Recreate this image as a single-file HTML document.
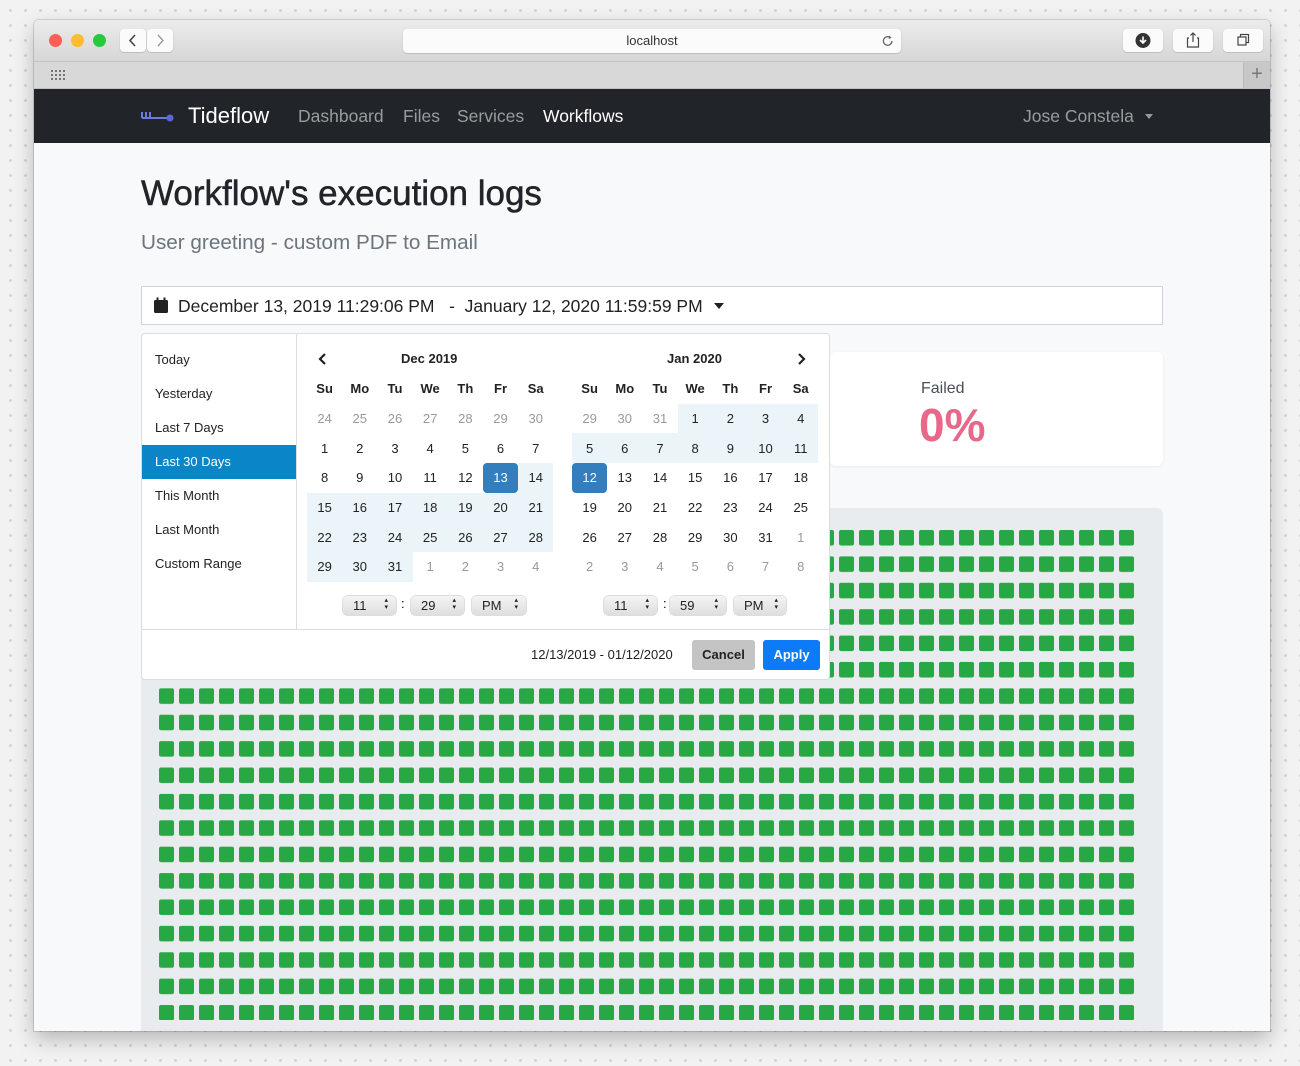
<!DOCTYPE html>
<html><head><meta charset="utf-8">
<style>
*{box-sizing:border-box;margin:0;padding:0}
html,body{width:1300px;height:1066px;overflow:hidden}
body{font-family:"Liberation Sans",Arial,sans-serif;background:#f2f2f2;
background-image:radial-gradient(circle,#d4d4d4 1.3px,transparent 1.6px);background-size:15px 15px;background-position:3px 3px;position:relative}
.win{position:absolute;left:34px;top:20px;width:1236px;height:1011px;background:#f8f9fa;border-radius:5px 5px 0 0;overflow:hidden;box-shadow:0 8px 20px rgba(0,0,0,.25),0 0 0 1px rgba(0,0,0,.12)}
.tb{position:absolute;left:0;top:0;width:100%;height:42px;background:linear-gradient(#ececec,#d6d6d6);border-bottom:1px solid #c4c4c4}
.tabs{position:absolute;left:0;top:42px;width:100%;height:27px;background:#d8d8d8;border-bottom:1px solid #c0c0c0}
.dot{position:absolute;top:14px;width:13px;height:13px;border-radius:50%}
.btn{position:absolute;background:#fbfbfb;border-radius:4px;box-shadow:0 0.5px 1px rgba(0,0,0,.25)}
.nav{position:absolute;left:0;top:69px;width:100%;height:54px;background:#212529}
.nav a{position:absolute;top:17px;font-size:17.5px;color:#999c9f;text-decoration:none}
.abs{position:absolute}
.cal{position:absolute;display:grid;grid-template-columns:repeat(7,35.2px);grid-auto-rows:29.7px;font-size:13px;color:#222}
.cal div{display:flex;align-items:center;justify-content:center}
.cal .h{font-weight:bold}
.cal .o{color:#999}
.cal .r{background:#ebf4f8}
.cal .s{background:#357ebd;color:#fff;border-radius:4px}
.sel{position:absolute;top:576px;height:19px;background:linear-gradient(#f4f4f4,#dedede);border-radius:4px;font-size:13px;color:#222;padding:2px 0 0 10px;box-shadow:0 0 0 .5px #bbb}
.sel:after{content:"\25B4\A\25BE";white-space:pre;position:absolute;right:8px;top:1px;font-size:7px;line-height:7px}
.rng{position:absolute;left:13px;font-size:13px;color:#222}
</style></head><body>
<div class="win">
 <div class="tb">
  <div class="dot" style="left:15px;background:#fd5f57"></div>
  <div class="dot" style="left:37px;background:#febc2e"></div>
  <div class="dot" style="left:59px;background:#28c840"></div>
  <div class="btn" style="left:86px;top:9px;width:26px;height:23px"><svg width="26" height="23"><path d="M15 6l-5 5.5 5 5.5" stroke="#444" stroke-width="1.6" fill="none"/></svg></div>
  <div class="btn" style="left:113px;top:9px;width:26px;height:23px"><svg width="26" height="23"><path d="M11 6l5 5.5-5 5.5" stroke="#999" stroke-width="1.4" fill="none"/></svg></div>
  <div class="btn" style="left:369px;top:9px;width:498px;height:24px;font-size:13px;color:#333;text-align:center;line-height:24px">localhost
   <svg style="position:absolute;right:6px;top:5px" width="14" height="14"><path d="M11 7a4.3 4.3 0 1 1-1.5-3.3" stroke="#666" stroke-width="1.3" fill="none"/><path d="M8 1.5l2.5 2.3-2.8 1.3z" fill="#666"/></svg></div>
  <div class="btn" style="left:1089px;top:9px;width:40px;height:23px"><svg width="40" height="23"><circle cx="20" cy="11.5" r="7.5" fill="#333"/><path d="M20 7.5v6M17 11l3 3 3-3" stroke="#fff" stroke-width="1.6" fill="none"/></svg></div>
  <div class="btn" style="left:1139px;top:9px;width:40px;height:23px"><svg width="40" height="23"><path d="M16 9h-1.5v9h11v-9H24" stroke="#444" stroke-width="1.2" fill="none"/><path d="M20 4v9M17.5 6.5L20 4l2.5 2.5" stroke="#444" stroke-width="1.2" fill="none"/></svg></div>
  <div class="btn" style="left:1189px;top:9px;width:40px;height:23px"><svg width="40" height="23"><rect x="15" y="8" width="8" height="8" stroke="#444" stroke-width="1.2" fill="none"/><path d="M17.5 8V5.5h8v8H23" stroke="#444" stroke-width="1.2" fill="none"/></svg></div>
 </div>
 <div class="tabs">
  <svg style="position:absolute;left:16px;top:7px" width="16" height="12"><g fill="#555"><circle cx="2" cy="2" r="1"/><circle cx="6" cy="2" r="1"/><circle cx="10" cy="2" r="1"/><circle cx="14" cy="2" r="1"/><circle cx="2" cy="6" r="1"/><circle cx="6" cy="6" r="1"/><circle cx="10" cy="6" r="1"/><circle cx="14" cy="6" r="1"/><circle cx="2" cy="10" r="1"/><circle cx="6" cy="10" r="1"/><circle cx="10" cy="10" r="1"/><circle cx="14" cy="10" r="1"/></g></svg>
  <div style="position:absolute;right:0;top:0;width:27px;height:26px;background:#c8c8c8;border-left:1px solid #bbb;text-align:center;font-size:20px;line-height:24px;color:#777">+</div>
 </div>
 <div class="nav">
  <svg style="position:absolute;left:107px;top:20px" width="34" height="14"><path d="M1 3v6M5 3v6M9 3v6M1 9h27" stroke="#6c7ae0" stroke-width="2" fill="none"/><circle cx="29" cy="9" r="3.5" fill="#5a67d8"/></svg>
  <div class="abs" style="left:154px;top:14px;font-size:22px;color:#fff">Tideflow</div>
  <a style="left:264px">Dashboard</a><a style="left:369px">Files</a><a style="left:423px">Services</a><a style="left:509px;color:#fff">Workflows</a>
  <a style="left:989px">Jose Constela</a>
  <div class="abs" style="left:1111px;top:25px;border:4.5px solid transparent;border-top:5px solid #999"></div>
 </div>
 <div class="abs" style="left:107px;top:154px;font-size:35px;color:#212529;-webkit-text-stroke:0.5px #212529">Workflow's execution logs</div>
 <div class="abs" style="left:107px;top:211px;font-size:20.7px;color:#6c757d">User greeting - custom PDF to Email</div>
 <div class="abs" style="left:107px;top:266px;width:1022px;height:39px;background:#fff;border:1px solid #ced4da">
  <svg style="position:absolute;left:11px;top:10px" width="16" height="17"><rect x="1" y="3" width="14" height="13" rx="1.5" fill="#222"/><rect x="3.5" y="0.5" width="2" height="4" fill="#222"/><rect x="10.5" y="0.5" width="2" height="4" fill="#222"/></svg>
  <div class="abs" style="left:36px;top:9px;font-size:17.5px;color:#222;white-space:pre">December 13, 2019 11:29:06 PM   -  January 12, 2020 11:59:59 PM</div>
  <div class="abs" style="left:572px;top:16px;border:5px solid transparent;border-top:6px solid #222"></div>
 </div>
 <div class="abs" style="left:796px;top:332px;width:333px;height:114px;background:#fff;border-radius:6px;box-shadow:0 1px 3px rgba(0,0,0,.06)">
  <div class="abs" style="left:91px;top:28px;font-size:16px;color:#495057">Failed</div>
  <div class="abs" style="left:89px;top:46px;font-size:46px;font-weight:bold;color:#e8688a">0%</div>
 </div>
 <div class="abs" style="left:107px;top:488px;width:1022px;height:540px;background:#e9ecef;border-radius:6px">
  <svg class="abs" style="left:18px;top:22px" width="980" height="520"><defs><pattern id="g" width="20" height="26.39" patternUnits="userSpaceOnUse"><rect width="15" height="15.5" rx="2" fill="#28a745"/></pattern></defs><rect width="980" height="490" fill="url(#g)"/></svg>
 </div>
 <!-- dropdown -->
 <div class="abs" style="left:107px;top:313px;width:689px;height:347px;background:#fff;border:1px solid #ddd;border-radius:4px">
  <div class="abs" style="left:154px;top:0;width:1px;height:296px;background:#ddd"></div>
  <div class="abs" style="left:0;top:295px;width:687px;height:1px;background:#ddd"></div>
  <div class="rng" style="top:18px">Today</div>
  <div class="rng" style="top:52px">Yesterday</div>
  <div class="rng" style="top:86px">Last 7 Days</div>
  <div class="abs" style="left:0;top:111px;width:154px;height:34px;background:#0a85c8"></div>
  <div class="rng" style="top:120px;color:#fff">Last 30 Days</div>
  <div class="rng" style="top:154px">This Month</div>
  <div class="rng" style="top:188px">Last Month</div>
  <div class="rng" style="top:222px">Custom Range</div>
 </div>
 <svg class="abs" style="left:283px;top:332px" width="12" height="14"><path d="M8 2l-5 5 5 5" stroke="#222" stroke-width="2.2" fill="none"/></svg>
 <svg class="abs" style="left:762px;top:332px" width="12" height="14"><path d="M3 2l5 5-5 5" stroke="#222" stroke-width="2.2" fill="none"/></svg>
 <div class="abs" style="left:367px;top:331px;font-size:13px;font-weight:bold;color:#222">Dec 2019</div>
 <div class="abs" style="left:633px;top:331px;font-size:13px;font-weight:bold;color:#222">Jan 2020</div>
 <div class="cal" style="left:273px;top:354px">
  <div class="h">Su</div><div class="h">Mo</div><div class="h">Tu</div><div class="h">We</div><div class="h">Th</div><div class="h">Fr</div><div class="h">Sa</div>
  <div class="o">24</div><div class="o">25</div><div class="o">26</div><div class="o">27</div><div class="o">28</div><div class="o">29</div><div class="o">30</div>
  <div>1</div><div>2</div><div>3</div><div>4</div><div>5</div><div>6</div><div>7</div>
  <div>8</div><div>9</div><div>10</div><div>11</div><div>12</div><div class="s">13</div><div class="r">14</div>
  <div class="r">15</div><div class="r">16</div><div class="r">17</div><div class="r">18</div><div class="r">19</div><div class="r">20</div><div class="r">21</div>
  <div class="r">22</div><div class="r">23</div><div class="r">24</div><div class="r">25</div><div class="r">26</div><div class="r">27</div><div class="r">28</div>
  <div class="r">29</div><div class="r">30</div><div class="r">31</div><div class="o">1</div><div class="o">2</div><div class="o">3</div><div class="o">4</div>
 </div>
 <div class="cal" style="left:538px;top:354px">
  <div class="h">Su</div><div class="h">Mo</div><div class="h">Tu</div><div class="h">We</div><div class="h">Th</div><div class="h">Fr</div><div class="h">Sa</div>
  <div class="o">29</div><div class="o">30</div><div class="o">31</div><div class="r">1</div><div class="r">2</div><div class="r">3</div><div class="r">4</div>
  <div class="r">5</div><div class="r">6</div><div class="r">7</div><div class="r">8</div><div class="r">9</div><div class="r">10</div><div class="r">11</div>
  <div class="s">12</div><div>13</div><div>14</div><div>15</div><div>16</div><div>17</div><div>18</div>
  <div>19</div><div>20</div><div>21</div><div>22</div><div>23</div><div>24</div><div>25</div>
  <div>26</div><div>27</div><div>28</div><div>29</div><div>30</div><div>31</div><div class="o">1</div>
  <div class="o">2</div><div class="o">3</div><div class="o">4</div><div class="o">5</div><div class="o">6</div><div class="o">7</div><div class="o">8</div>
 </div>
 <div class="sel" style="left:309px;width:53px">11</div><div class="abs" style="left:367px;top:576px;font-size:13px">:</div>
 <div class="sel" style="left:377px;width:53px">29</div>
 <div class="sel" style="left:438px;width:54px">PM</div>
 <div class="sel" style="left:570px;width:53px">11</div><div class="abs" style="left:629px;top:576px;font-size:13px">:</div>
 <div class="sel" style="left:636px;width:56px">59</div>
 <div class="sel" style="left:700px;width:52px">PM</div>
 <div class="abs" style="left:497px;top:627px;font-size:13px;color:#222">12/13/2019 - 01/12/2020</div>
 <div class="abs" style="left:658px;top:620px;width:63px;height:30px;background:#c4c4c4;border-radius:3px;font-size:13px;font-weight:bold;color:#222;text-align:center;line-height:30px">Cancel</div>
 <div class="abs" style="left:729px;top:620px;width:57px;height:30px;background:#0d7bf7;border-radius:3px;font-size:13px;font-weight:bold;color:#fff;text-align:center;line-height:30px">Apply</div>
</div>
</body></html>
